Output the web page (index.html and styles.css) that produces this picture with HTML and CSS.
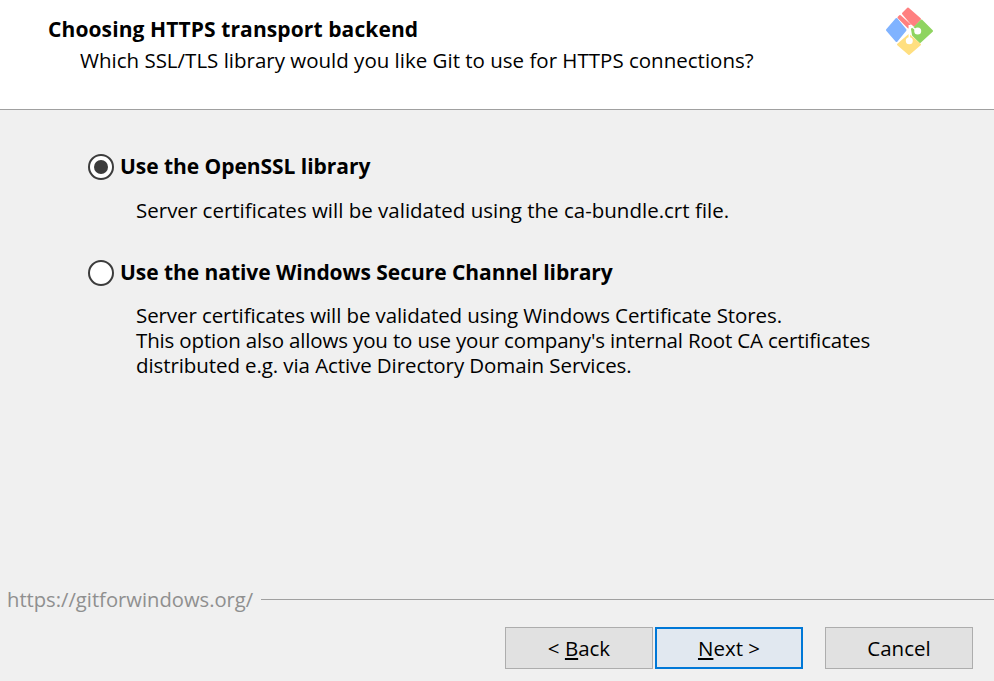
FILE: index.html
```html
<!DOCTYPE html>
<html lang="en">
<head>
<meta charset="utf-8">
<title>Git Setup</title>
<link rel="stylesheet" href="styles.css">
</head>
<body>
<div class="wizard">
  <header class="header">
    <div class="header-text">
      <h1 class="title">Choosing HTTPS transport backend</h1>
      <p class="subtitle">Which SSL/TLS library would you like Git to use for HTTPS connections?</p>
    </div>
    <svg class="logo" width="52" height="52" viewBox="0 0 52 52" aria-hidden="true">
      <g stroke-width="2" stroke-linejoin="round">
        <path d="M19 8.500 24 3.500 36 14 30 20.500 27 18 Z" fill="#ff8080" stroke="#ff8080"/>
        <path d="M14.500 12.500 16 11 26 20 24.500 22.500 Z" fill="#ff8080" stroke="#ff8080"/>
        <path d="M37.500 15.500 48 26 36 37 29 30 28 24 31 22 Z" fill="#8fd460" stroke="#8fd460"/>
        <path d="M12.500 14 21.500 25 12.500 36 3 25 Z" fill="#80b3ff" stroke="#80b3ff"/>
        <path d="M25 30 36 39.500 25 49 14 39.500 Z" fill="#ffdf80" stroke="#ffdf80"/>
      </g>
      <circle cx="25.300" cy="35.700" r="3.500" fill="#fff"/>
      <circle cx="33.700" cy="26" r="3.500" fill="#fff"/>
      <path d="M25.300 35V20 M26 20 33 26" fill="none" stroke="#fff" stroke-width="1.500"/>
    </svg>
  </header>
  <main class="content">
    <div class="option">
      <div class="option-head">
        <span class="radio radio-on"></span>
        <span class="option-label">Use the OpenSSL library</span>
      </div>
      <p class="option-desc">Server certificates will be validated using the ca-bundle.crt file.</p>
    </div>
    <div class="option">
      <div class="option-head">
        <span class="radio"></span>
        <span class="option-label">Use the native Windows Secure Channel library</span>
      </div>
      <p class="option-desc option-desc-tight">
        <span class="desc-line">Server certificates will be validated using Windows Certificate Stores.</span>
        <span class="desc-line desc-line-long">This option also allows you to use your company's internal Root CA certificates</span>
        <span class="desc-line">distributed e.g. via Active Directory Domain Services.</span>
      </p>
    </div>
  </main>
  <footer class="footer">
    <div class="brand">
      <span class="brand-text">https://gitforwindows.org/</span>
      <span class="brand-line"></span>
    </div>
    <div class="buttons">
      <button class="btn" type="button">&lt; <u>B</u>ack</button>
      <button class="btn btn-default" type="button"><u>N</u>ext &gt;</button>
      <button class="btn btn-cancel" type="button">Cancel</button>
    </div>
  </footer>
</div>
</body>
</html>
```
FILE: styles.css
```css
* { box-sizing: border-box; }
html, body { margin: 0; padding: 0; }
body {
  width: 994px;
  height: 681px;
  overflow: hidden;
  background: #f0f0f0;
  color: #000;
  font-family: "Open Sans", "Noto Sans", "Liberation Sans", sans-serif;
  font-size: 20.5px;
}
.wizard { display: flex; flex-direction: column; height: 681px; }
.header {
  height: 110px;
  background: #fff;
  border-bottom: 1px solid #a0a0a0;
  display: flex;
  justify-content: space-between;
  align-items: flex-start;
  padding: 5px 58px 0 48px;
}
.title { margin: 11px 0 0; font-size: 21px; line-height: 27px; font-weight: 700; letter-spacing: 0.1px; }
.subtitle { margin: 4px 0 0 32px; font-size: 20.5px; line-height: 27px; }
.content { flex: 1; padding: 43px 0 0 88px; }
.option { margin-bottom: 36px; }
.option-head { display: flex; align-items: center; gap: 6px; height: 27px; }
.radio {
  width: 26px;
  height: 26px;
  border: 2px solid #3c3c3c;
  border-radius: 50%;
  background: #fff;
  display: flex;
  align-items: center;
  justify-content: center;
}
.radio-on::after {
  content: "";
  width: 14px;
  height: 14px;
  border-radius: 50%;
  background: #3c3c3c;
}
.option-label { font-size: 21px; font-weight: 700; letter-spacing: -0.05px; line-height: 27px; }
.option-desc { margin: 18px 0 0 48px; line-height: 25px; }
.option-desc-tight { margin-top: 17px; }
.desc-line { display: block; letter-spacing: -0.09px; }
.desc-line-long { letter-spacing: -0.155px; }
.footer { height: 92px; }
.brand { display: flex; align-items: center; gap: 8px; height: 20px; }
.brand-text { padding-left: 7px; color: #8f8f8f; line-height: 20px; font-size: 20.2px; }
.brand-line { flex: 1; height: 1px; background: #a0a0a0; }
.buttons { display: flex; padding: 18px 0 0 505px; }
.btn {
  width: 148px;
  height: 42px;
  margin: 0 2px 0 0;
  padding: 0;
  border: 1px solid #adadad;
  background: #e1e1e1;
  color: #000;
  font: inherit;
}
.btn-default { border-color: #0078d7; box-shadow: inset 0 0 0 1px #0078d7; background: #e1e8f0; }
.btn-cancel { margin: 0 0 0 20px; }
```
